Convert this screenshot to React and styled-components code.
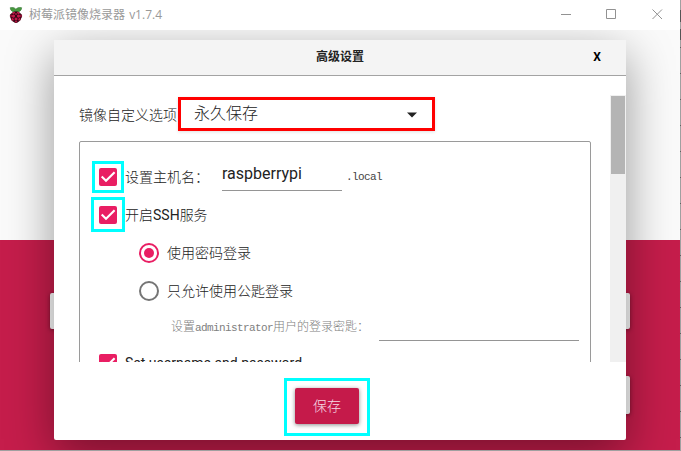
import React from "react";
import styled, { createGlobalStyle, css } from "styled-components";

const Global = createGlobalStyle`
  * { box-sizing: border-box; }
  body { margin: 0; overflow: hidden; }
`;

const Desktop = styled.div`
  width: 681px;
  height: 451px;
  padding: 0 1px 1px 0;
  background:
    linear-gradient(#555, #555) 680px 10px / 1px 12px no-repeat,
    linear-gradient(#555, #555) 680px 29px / 1px 11px no-repeat,
    repeating-linear-gradient(#a0a0a0 0 21px, #606060 21px 22px, #a0a0a0 22px 26px);
  font-family: Roboto, "Noto Sans CJK SC", sans-serif;
  white-space: nowrap;
`;
const Window = styled.div`
  display: flex;
  flex-direction: column;
  width: 680px;
  height: 450px;
  overflow: hidden;
`;
const TitleBar = styled.header`
  display: flex;
  align-items: center;
  flex: 0 0 30px;
  padding-left: 9px;
  background: #fff;
  color: #999;
  font: 12px/30px "Noto Sans", "Noto Sans CJK SC", sans-serif;
`;
const AppName = styled.span`
  flex: 1;
  height: 30px;
  padding-left: 6px;
  word-spacing: 1px;
`;
const Version = styled.span`
  font-family: "Open Sans", sans-serif;
`;
const Controls = styled.svg`
  display: block;
  width: 138px;
  height: 30px;
`;
const Client = styled.main`
  position: relative;
  flex: 1;
  display: flex;
  flex-direction: column;
  overflow: hidden;
`;
const Hero = styled.div`
  flex: 0 0 210px;
  background: #fafafa;
`;
const Actions = styled.div`
  flex: 1;
  display: flex;
  flex-direction: column;
  gap: 47px;
  padding: 53px 50px 0;
  background: #c51d4b;
`;
const ActionRow = styled.div`
  display: flex;
  justify-content: ${(p) => (p.$end ? "flex-end" : "space-between")};
`;
const ActionButton = styled.div`
  width: 120px;
  height: ${(p) => (p.$tall ? 38 : 36)}px;
  border-radius: 2px;
  background: #fafafa;
  box-shadow: 0 1px 4px rgba(0, 0, 0, 0.4);
`;

const Dialog = styled.section`
  position: absolute;
  left: 54px;
  top: 10px;
  width: 572px;
  height: 400px;
  display: flex;
  flex-direction: column;
  background: #fff;
  border-radius: 0 0 2px 2px;
  box-shadow: 0 15px 48px rgba(0, 0, 0, 0.4);
`;
const DialogHeader = styled.div`
  display: grid;
  grid-template-columns: 58px 1fr 58px;
  flex: 0 0 36px;
  background: #f4f4f4;
  border-bottom: 1px solid #a3a3a3;
  color: #222;
  font-size: 12px;
  font-weight: 700;
  line-height: 35px;
  text-align: center;
`;
const Heading = styled.div`
  grid-column: 2;
`;
const Close = styled.div`
  font-family: Roboto, sans-serif;
  font-size: 12px;
  color: #000;
`;
const Scroller = styled.div`
  display: flex;
  flex: 0 0 267px;
  margin-top: 19px;
  overflow: hidden;
`;
const Form = styled.div`
  flex: 1;
  padding: 0 19px 0 25px;
`;
const Track = styled.div`
  width: 16px;
  padding: 1px;
  background: #f0f0f0;
`;
const Thumb = styled.div`
  height: 78px;
  background: #b4b4b4;
`;
const cjk = css`
  color: #222;
  font-weight: 300;
  font-size: 14px;
`;
const ScopeRow = styled.div`
  display: flex;
  align-items: flex-start;
  height: 46px;
`;
const Label = styled.span`
  ${cjk}
  line-height: 20px;
  b { font-weight: 400; }
`;
const ScopeLabel = styled(Label)`
  width: 99px;
  margin-top: 10px;
`;
const Select = styled.div`
  display: flex;
  align-items: center;
  justify-content: space-between;
  width: 257px;
  height: 34px;
  margin-top: 2px;
  padding: 0 14px 0 13px;
  border: 3px solid #f00;
  box-shadow: 0 1px 3px rgba(0, 0, 0, 0.12);
  ${cjk}
  font-size: 16px;
  line-height: 28px;
`;
const Caret = styled.svg`
  display: block;
  width: 12px;
  height: 6px;
  margin-top: 2px;
`;
const Group = styled.div`
  height: 330px;
  width: 512px;
  padding: 16px 11px 0 19px;
  border: 1px solid #9a9a9a;
  border-radius: 2px;
`;
const Option = styled.div`
  display: flex;
  align-items: center;
  height: 38px;
  padding-left: ${(p) => (p.$nested ? 40 : 0)}px;
`;
const Box = styled.div`
  position: relative;
  width: 18px;
  height: 18px;
  margin-right: 8px;
  border-radius: 2px;
  background: #e91e63;
  svg { display: block; }
`;
const Mark = styled.div`
  position: absolute;
  inset: ${(p) => p.$inset};
  border: 3px solid #0ff;
`;
const Radio = styled.div`
  display: grid;
  place-items: center;
  width: 20px;
  height: 20px;
  margin-right: 8px;
  border: 2px solid ${(p) => (p.$on ? "#e91e63" : "#757575")};
  border-radius: 50%;
  &::after {
    content: "";
    width: 10px;
    height: 10px;
    border-radius: 50%;
    background: ${(p) => (p.$on ? "#e91e63" : "transparent")};
  }
`;
const Input = styled.div`
  width: ${(p) => p.$width}px;
  height: 32px;
  margin-bottom: 4px;
  border-bottom: 1px solid #959595;
  color: #222;
  font-size: 16px;
  line-height: 29px;
`;
const HostLabel = styled(Label)`
  width: 97px;
`;
const mono = css`
  font: 11px/20px "Liberation Mono", monospace;
  letter-spacing: -0.6px;
`;
const Suffix = styled.span`
  padding-left: 4px;
  color: #444;
  ${mono}
`;
const KeyRow = styled.div`
  display: flex;
  align-items: center;
  justify-content: space-between;
  height: 34px;
  padding-left: 72px;
`;
const Hint = styled.span`
  color: #808080;
  font-size: 12px;
  font-weight: 300;
  line-height: 20px;
`;
const UserName = styled.span`
  ${mono}
`;
const Plain = styled.span`
  color: #222;
  font-size: 14px;
`;
const Footer = styled.footer`
  flex: 1;
  padding: 26px 0 0 241px;
`;
const Save = styled.div`
  position: relative;
  width: 64px;
  height: 36px;
  border-radius: 2px;
  background: #c51a4a;
  box-shadow: 0 1px 4px rgba(0, 0, 0, 0.45);
  color: #f5dce4;
  font-size: 14px;
  font-weight: 300;
  line-height: 36px;
  text-align: center;
`;

const Raspberry = () => (
  <svg width="14" height="17" viewBox="0 0 14 17">
    <path d="M6.8 4.8C4 5.300 1.200 3.900 1.200.7 3.400.1 5.500.4 6.900 2.200 8.200.4 10.400.1 12.700.7c0 3.200-2.800 4.600-5.900 4.100Z" fill="#46983e" stroke="#2b6a2a" strokeWidth=".5" />
    <path d="M7 4.200c2 0 3.800 1 4.600 2.400 1.900 1 2 3.300.7 4.500-.2 2-1.700 3.200-3 3.800-1.400 1.400-3.200 1.400-4.600 0C3 14.300 1.800 13 1.600 11 .4 9.500.6 7.500 2.300 6.600 3.200 5.200 5 4.200 7 4.200Z" fill="#350513" />
    <g fill="#c4194a">
      <ellipse cx="4.7" cy="6" rx="1.5" ry=".9" transform="rotate(-30 4.7 6)" />
      <ellipse cx="9.3" cy="6" rx="1.5" ry=".9" transform="rotate(30 9.3 6)" />
      <circle cx="4.5" cy="9.1" r="1.6" /><circle cx="9.5" cy="9.1" r="1.6" />
      <circle cx="7" cy="11.9" r="1.5" /><ellipse cx="7" cy="7" rx="1.2" ry=".8" />
      <ellipse cx="2" cy="9" rx=".7" ry="1.4" /><ellipse cx="12" cy="9" rx=".7" ry="1.4" />
      <ellipse cx="3.6" cy="12.4" rx="1.1" ry="1.4" transform="rotate(-30 3.6 12.4)" />
      <ellipse cx="10.4" cy="12.4" rx="1.1" ry="1.4" transform="rotate(30 10.4 12.4)" />
      <ellipse cx="7" cy="14.7" rx="1.3" ry=".7" />
    </g>
  </svg>
);

const Checkbox = ({ mark }) => (
  <Box>
    <svg width="18" height="18" viewBox="0 0 18 18">
      <path d="M2.700 8.600 7 12.800 15.600 4.200" fill="none" stroke="#fff" strokeWidth="2.1" />
    </svg>
    {mark && <Mark $inset={mark} />}
  </Box>
);

export default function App() {
  return (
    <Desktop>
      <Global />
      <Window>
        <TitleBar>
          <Raspberry />
          <AppName>树莓派镜像烧录器 <Version>v1.7.4</Version></AppName>
          <Controls viewBox="0 0 138 30" fill="none" stroke="#929292">
            <path d="M19 14.500h10M64.500 9.500h9v9h-9zM110.500 9.500l9.500 9.500M120 9.500l-9.500 9.500" />
          </Controls>
        </TitleBar>
        <Client>
          <Hero />
          <Actions>
            <ActionRow><ActionButton /><ActionButton /></ActionRow>
            <ActionRow $end><ActionButton $tall /></ActionRow>
          </Actions>
          <Dialog>
            <DialogHeader>
              <Heading>高级设置</Heading>
              <Close>X</Close>
            </DialogHeader>
            <Scroller>
              <Form>
                <ScopeRow>
                  <ScopeLabel>镜像自定义选项</ScopeLabel>
                  <Select>
                    永久保存
                    <Caret viewBox="0 0 12 6"><path d="M1 .5h10L6 5.500z" fill="#222" /></Caret>
                  </Select>
                </ScopeRow>
                <Group>
                  <Option>
                    <Checkbox mark="-7px" />
                    <HostLabel>设置主机名：</HostLabel>
                    <Input $width={120}>raspberrypi</Input>
                    <Suffix>.local</Suffix>
                  </Option>
                  <Option>
                    <Checkbox mark="-9px -8px -8px" />
                    <Label>开启<b>SSH</b>服务</Label>
                  </Option>
                  <Option $nested><Radio $on /><Label>使用密码登录</Label></Option>
                  <Option $nested><Radio /><Label>只允许使用公匙登录</Label></Option>
                  <KeyRow>
                    <Hint>设置<UserName>administrator</UserName>用户的登录密匙：</Hint>
                    <Input $width={200} />
                  </KeyRow>
                  <Option>
                    <Checkbox />
                    <Plain>Set username and password</Plain>
                  </Option>
                </Group>
              </Form>
              <Track><Thumb /></Track>
            </Scroller>
            <Footer>
              <Save>保存<Mark $inset="-10px -11px -12px" /></Save>
            </Footer>
          </Dialog>
        </Client>
      </Window>
    </Desktop>
  );
}
